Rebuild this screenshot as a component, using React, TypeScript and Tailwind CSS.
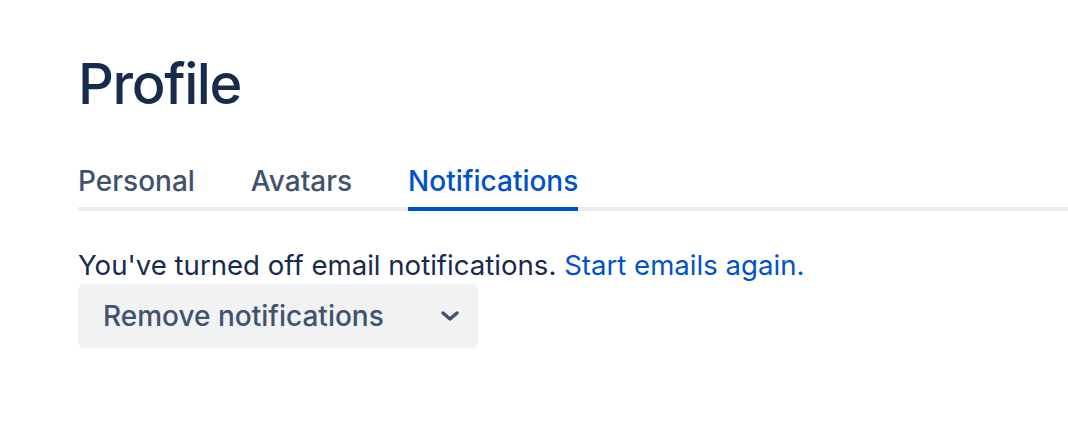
import React from "react";

const TABS = ["Personal", "Avatars", "Notifications"];

export default function App() {
  const active = "Notifications";

  return (
    <div className="h-[434px] w-[1068px] overflow-hidden bg-white pl-[78px] pt-[46px] font-['Inter',sans-serif] text-[#172b4d]">
      <h1 className="text-[56px] font-medium leading-[76px] tracking-[-0.025em]">Profile</h1>

      {/* Tabs */}
      <div className="mt-[41px] flex gap-[56px] border-b-4 border-[#ebecf0]">
        {TABS.map((t) => (
          <div
            key={t}
            className={
              t === active
                ? "-mb-[4px] border-b-4 border-[#0052cc] pb-[8px] text-[28px] font-medium leading-[36px] text-[#0052cc]"
                : "-mb-[4px] border-b-4 border-transparent pb-[8px] text-[28px] font-medium leading-[36px] text-[#42526e]"
            }
          >
            {t}
          </div>
        ))}
      </div>

      <p className="mt-[36px] text-[27.6px] leading-[36px]">
        You've turned off email notifications.{" "}
        <a className="text-[#0052cc]">Start emails again.</a>
      </p>

      <button className="mt-[1px] flex h-[64px] w-[400px] items-center justify-between rounded-[6px] bg-[#f1f2f4] pl-[25px] pr-[18px] text-[28px] font-medium text-[#42526e]">
        <span>Remove notifications</span>
        <svg width="20" height="14" viewBox="0 0 20 14" fill="none">
          <path d="M3 4l7 6 7-6" stroke="#42526e" strokeWidth="3.5" strokeLinecap="round" strokeLinejoin="round" />
        </svg>
      </button>
    </div>
  );
}
